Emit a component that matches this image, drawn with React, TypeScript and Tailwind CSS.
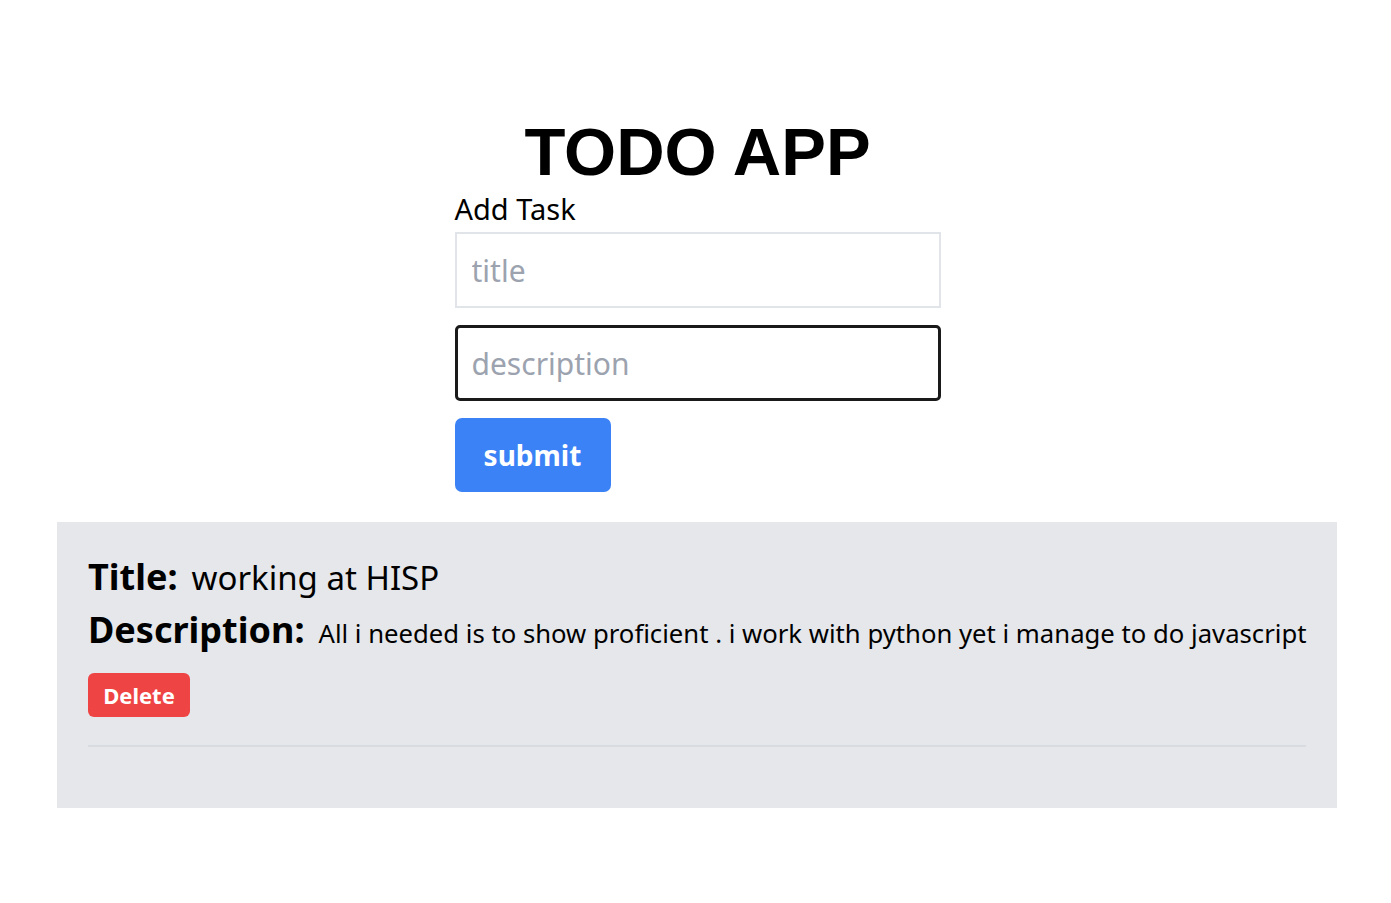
export default function App() {
    return (
        <div className="min-h-[903px] w-full bg-white pt-[118px] font-['Noto_Sans',sans-serif] text-black">
            {/* form */}
            <div className="mx-auto w-[486px] translate-x-[2px]">
                <h1 className="text-center font-['Liberation_Sans',Arial,sans-serif] text-[67px] font-bold leading-none">
                    TODO APP
                </h1>
                <p className="mt-[5px] text-[29px] leading-[38px]">Add Task</p>
                <form className="mt-[4px] flex flex-col gap-[17px]" onSubmit={(e) => e.preventDefault()}>
                    <input
                        type="text"
                        placeholder="title"
                        className="h-[76px] w-full border-2 border-[#e1e4e8] px-[15px] text-[30px] outline-none placeholder:text-[#9ca3af]"
                    />
                    <input
                        type="text"
                        placeholder="description"
                        autoFocus
                        className="h-[76px] w-full rounded-[5px] border-[3px] border-[#1a1a1a] px-[14px] text-[30px] caret-black outline-none placeholder:text-[#9ca3af]"
                    />
                    <button
                        type="submit"
                        className="h-[74px] w-[156px] rounded-[7px] bg-[#3b82f6] text-[28px] font-bold text-white"
                    >
                        submit
                    </button>
                </form>
            </div>

            {/* task list */}
            <div className="ml-[57px] mt-[30px] w-[1280px] bg-[#e5e7eb] px-[31px] pb-[61px] pt-[31px]">
                <div className="flex items-baseline gap-[14px]">
                    <span className="text-[36px] font-bold leading-[48px]">Title:</span>
                    <span className="text-[33px] leading-[48px]">working at HISP</span>
                </div>
                <div className="mt-[4px] flex items-baseline gap-[14px] whitespace-nowrap">
                    <span className="text-[36px] font-bold leading-[48px]">Description:</span>
                    <span className="text-[25.7px] leading-[48px]">
                        All i needed is to show proficient . i work with python yet i manage to do javascript
                    </span>
                </div>
                <button
                    type="button"
                    className="mt-[15px] h-[44px] w-[102px] rounded-[6px] bg-[#ef4444] text-[22px] font-bold text-white"
                >
                    Delete
                </button>
                <hr className="mt-[28px] border-t-2 border-[#d8dbe0]" />
            </div>
        </div>
    );
}
